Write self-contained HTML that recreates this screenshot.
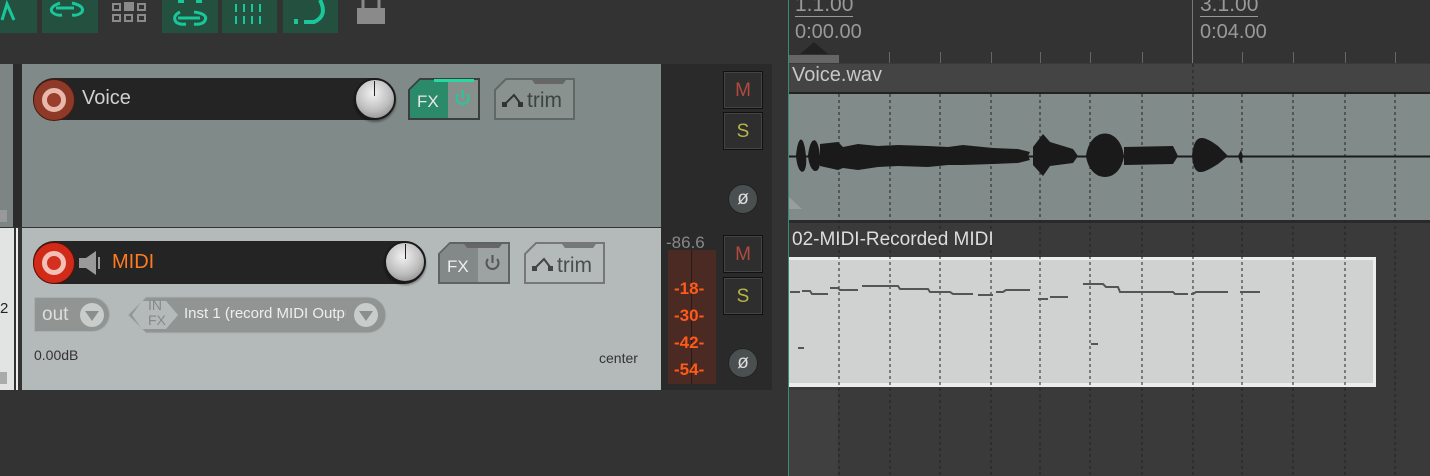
<!DOCTYPE html><html><head><style>
*{margin:0;padding:0;box-sizing:border-box}
body{width:1430px;height:476px;background:#333;position:relative;overflow:hidden;font-family:"Liberation Sans",sans-serif}
.a{position:absolute}
.tb{position:absolute;top:0;height:33px;background:#23503f}
.pill{position:absolute;background:#242424;border-radius:21px}
.knob{position:absolute;border-radius:50%;background:radial-gradient(circle at 45% 35%,#f2f2f2,#bdbdbd 55%,#7a7a7a);border:2px solid #1a1a1a;box-shadow:0 2px 2px rgba(0,0,0,.4)}
.ms{position:absolute;width:40px;height:38px;background:#2e2e2e;border:1px solid #111;box-shadow:inset 0 0 0 1px #444;font-size:19px;text-align:center;line-height:37px}
.ph{position:absolute;width:30px;height:30px;border-radius:50%;background:#4a4f50;border:1px solid #222;color:#ddd;font-size:19px;text-align:center;line-height:28px}
.tick{position:absolute;top:52px;width:1px;height:11px;background:#666}
</style></head><body>
<!-- toolbar -->
<div class="tb" style="left:0;width:37px"></div>
<div class="tb" style="left:42px;width:56px"></div>
<div class="tb" style="left:162px;width:56px"></div>
<div class="tb" style="left:222px;width:55px"></div>
<div class="tb" style="left:283px;width:55px"></div>
<svg class="a" style="left:0;top:0" width="400" height="35" fill="none" stroke="#19c79a" stroke-width="3">
<path d="M2 20 L7 4 L14 20"/>
<path d="M60 3 Q49 7 52 12 Q56 16 62 15 M56 8 H74 M72 3 Q85 6 82 12 Q78 16 72 15"/>
<g stroke="#8a8a8a" stroke-width="2"><rect x="113" y="4" width="7" height="6"/><rect x="125" y="3" width="8" height="7" fill="#8a8a8a"/><rect x="138" y="4" width="7" height="6"/><rect x="113" y="15" width="7" height="6"/><rect x="125" y="15" width="7" height="6"/><rect x="138" y="15" width="7" height="6"/></g>
<rect x="178" y="0" width="6" height="3" fill="#19c79a" stroke="none"/><rect x="196" y="0" width="6" height="3" fill="#19c79a" stroke="none"/>
<path d="M180 12 Q172 16 176 22 Q180 25 186 24 M178 18 H200 M194 12 Q210 14 204 22 Q200 25 194 24"/>
<path d="M236 4 V12 M244 4 V12 M252 4 V12 M260 4 V12 M236 16 V24 M244 16 V24 M252 16 V24 M260 16 V24" stroke-width="2"/>
<path d="M320 0 Q328 16 314 22 H304" stroke-width="4"/><rect x="294" y="19" width="4" height="5" fill="#19c79a" stroke="none"/>
<rect x="357" y="8" width="28" height="16" fill="#8a8a8a" stroke="none"/><path d="M363 8 V0 M379 8 V0" stroke="#8a8a8a" stroke-width="3"/>
</svg>
<!-- voice track -->
<div class="a" style="left:0;top:64px;width:13px;height:163px;background:#7c8584"></div>
<div class="a" style="left:0;top:210px;width:7px;height:12px;background:#999"></div>
<div class="a" style="left:13px;top:64px;width:9px;height:163px;background:#2b2b2b"></div>
<div class="a" style="left:22px;top:64px;width:639px;height:163px;background:#808a88"></div>
<div class="pill" style="left:33px;top:78px;width:362px;height:42px"></div>
<div class="a" style="left:33px;top:79px;width:42px;height:42px;border-radius:50%;background:#8f3a28;border:1px solid #4a1a10"></div>
<div class="a" style="left:42px;top:88px;width:24px;height:24px;border-radius:50%;border:5px solid #e8b8ac;background:#9a3f2c"></div>
<div class="a" style="left:82px;top:87px;color:#d0d0d0;font-size:20px">Voice</div>
<div class="knob" style="left:354px;top:78px;width:42px;height:42px"></div>
<div class="a" style="left:374px;top:81px;width:1px;height:15px;background:#222"></div>
<svg class="a" style="left:406px;top:76px" width="180" height="48">
<path d="M3 14 L14 3 H73 V43 H3 Z" fill="#878f8d" stroke="#3a3f3e" stroke-width="2"/>
<path d="M4 14 L14 4 H42 V42 H4 Z" fill="#2b8a6a"/>
<rect x="28" y="3" width="40" height="3" fill="#26d9a3"/>
<text x="11" y="31" font-family="Liberation Sans" font-size="17" fill="#e8e8e8">FX</text>
<path d="M52 18 a6 6 0 1 0 9 0 M56.5 14 V22" stroke="#24c99a" stroke-width="2" fill="none"/>
<path d="M89 14 L100 3 H168 V43 H89 Z" fill="#8a9290" stroke="#606766" stroke-width="2"/>
<path d="M126 4 H160 L157 8 H129 Z" fill="#666"/>
<path d="M99 28 L108 19 L114 27" stroke="#333" stroke-width="2" fill="none"/>
<rect x="96" y="26" width="5" height="5" fill="#333"/><rect x="112" y="26" width="5" height="5" fill="#333"/>
<text x="121" y="31" font-family="Liberation Sans" font-size="21" fill="#3f4443">trim</text>
</svg>
<!-- mcp -->
<div class="a" style="left:661px;top:64px;width:111px;height:326px;background:#2a2a2a"></div>
<div class="ms" style="left:723px;top:71px;color:#b24a3e">M</div>
<div class="ms" style="left:723px;top:112px;color:#b8b44a">S</div>
<div class="ph" style="left:728px;top:184px">ø</div>
<!-- midi track -->
<div class="a" style="left:0;top:228px;width:14px;height:162px;background:#e2e4e4"></div>
<div class="a" style="left:0;top:372px;width:7px;height:12px;background:#aaa"></div>
<div class="a" style="left:14px;top:228px;width:8px;height:162px;background:#333"></div>
<div class="a" style="left:16px;top:228px;width:2px;height:162px;background:#eee"></div>
<div class="a" style="left:22px;top:228px;width:639px;height:162px;background:#b4bab9"></div>
<div class="a" style="left:0;top:300px;font-size:15px;color:#222">2</div>
<div class="pill" style="left:33px;top:241px;width:392px;height:43px"></div>
<div class="a" style="left:33px;top:242px;width:42px;height:42px;border-radius:50%;background:#d22a18;border:1px solid #5a1008"></div>
<div class="a" style="left:42px;top:251px;width:24px;height:24px;border-radius:50%;border:5px solid #f3c0b6;background:#d33020"></div>
<svg class="a" style="left:78px;top:250px" width="24" height="26"><path d="M1 8 H8 L18 1 V25 L8 18 H1 Z" fill="#9a9a9a"/><rect x="20" y="7" width="2" height="12" fill="#9a9a9a"/></svg>
<div class="a" style="left:112px;top:251px;color:#ff7a20;font-size:20px">MIDI</div>
<div class="knob" style="left:384px;top:241px;width:42px;height:42px"></div>
<div class="a" style="left:405px;top:244px;width:1px;height:15px;background:#222"></div>
<svg class="a" style="left:436px;top:240px" width="180" height="48">
<path d="M3 14 L14 3 H73 V43 H3 Z" fill="#9da3a2" stroke="#5e6463" stroke-width="2"/>
<path d="M4 14 L14 4 H42 V42 H4 Z" fill="#838988"/>
<path d="M28 4 H66 L63 8 H31 Z" fill="#666"/>
<text x="11" y="32" font-family="Liberation Sans" font-size="17" fill="#eee">FX</text>
<path d="M52 19 a6 6 0 1 0 9 0 M56.5 15 V23" stroke="#555" stroke-width="2" fill="none"/>
<path d="M89 14 L100 3 H168 V43 H89 Z" fill="#b4bab9" stroke="#777" stroke-width="2"/>
<path d="M126 4 H160 L157 8 H129 Z" fill="#777"/>
<path d="M99 28 L108 19 L114 27" stroke="#444" stroke-width="2" fill="none"/>
<rect x="96" y="26" width="5" height="5" fill="#444"/><rect x="112" y="26" width="5" height="5" fill="#444"/>
<text x="121" y="32" font-family="Liberation Sans" font-size="21" fill="#4a4f4e">trim</text>
</svg>
<div class="a" style="left:34px;top:297px;width:76px;height:35px;border-radius:0 18px 18px 0;background:#909594;border:1px solid #a9afae"></div>
<div class="a" style="left:42px;top:304px;color:#ddd;font-size:19px">out</div>
<div class="a" style="left:80px;top:303px;width:24px;height:24px;border-radius:50%;background:#c8cccb"></div>
<svg class="a" style="left:84px;top:310px" width="16" height="12"><path d="M1 1 H15 L8 11 Z" fill="#8a8f8e"/></svg>
<svg class="a" style="left:126px;top:296px" width="262" height="38"><path d="M2 19 L20 1 H242 A18 18 0 0 1 242 37 H20 Z" fill="#909594" stroke="#aeb3b2"/><path d="M16 5 L40 5 L52 19 L40 33 L16 33 L6 19Z" fill="#b4bab9"/></svg>
<div class="a" style="left:148px;top:298px;color:#888;font-size:14px;line-height:15px">IN<br>FX</div>
<div class="a" style="left:184px;top:305px;color:#eee;font-size:15px;width:162px;overflow:hidden;white-space:nowrap">Inst 1 (record MIDI Output)</div>
<div class="a" style="left:354px;top:303px;width:24px;height:24px;border-radius:50%;background:#c8cccb"></div>
<svg class="a" style="left:358px;top:310px" width="16" height="12"><path d="M1 1 H15 L8 11 Z" fill="#8a8f8e"/></svg>
<div class="a" style="left:34px;top:347px;color:#333;font-size:14px">0.00dB</div>
<div class="a" style="left:599px;top:350px;color:#333;font-size:14px">center</div>
<div class="a" style="left:668px;top:250px;width:48px;height:134px;background:#4a2a22"></div>
<div class="a" style="left:691px;top:250px;width:1px;height:134px;background:#2a1a16"></div>
<div class="a" style="left:666px;top:233px;color:#888;font-size:17px">-86.6</div>
<div class="a" style="left:674px;top:275px;color:#ff5a1a;font-size:17px;line-height:27px;font-weight:bold">-18-<br>-30-<br>-42-<br>-54-</div>
<div class="ms" style="left:723px;top:235px;color:#b24a3e">M</div>
<div class="ms" style="left:723px;top:277px;color:#b8b44a">S</div>
<div class="ph" style="left:728px;top:348px">ø</div>
<!-- arrange -->
<div class="a" style="left:788px;top:0;width:642px;height:476px;background:#3a3a3a"></div>
<div class="a" style="left:788px;top:0;width:642px;height:63px;background:#333"></div>
<div class="a" style="left:788px;top:390px;width:50px;height:86px;background:#404040"></div>
<div class="a" style="left:795px;top:-6px;color:#999;font-size:21px;border-bottom:1px solid #999;line-height:22px">1.1.00</div>
<div class="a" style="left:795px;top:21px;color:#999;font-size:20px">0:00.00</div>
<div class="a" style="left:1200px;top:-6px;color:#999;font-size:21px;border-bottom:1px solid #999;line-height:22px">3.1.00</div>
<div class="a" style="left:1200px;top:21px;color:#999;font-size:20px">0:04.00</div>
<div class="a" style="left:1192px;top:0;width:1px;height:63px;background:#777"></div>
<div class="a" style="left:789px;top:55px;width:50px;height:8px;background:#666"></div>
<svg class="a" style="left:800px;top:41px" width="28" height="14"><path d="M0 13 L14 1 L28 13Z" fill="#222"/></svg>
<div class="tick" style="left:889px"></div><div class="tick" style="left:940px"></div><div class="tick" style="left:991px"></div><div class="tick" style="left:1040px"></div><div class="tick" style="left:1090px"></div><div class="tick" style="left:1142px"></div><div class="tick" style="left:1242px"></div><div class="tick" style="left:1293px"></div><div class="tick" style="left:1345px"></div><div class="tick" style="left:1395px"></div>
<div class="a" style="left:789px;top:64px;width:641px;height:29px;background:#444"></div>
<div class="a" style="left:789px;top:92px;width:641px;height:2px;background:#222"></div>
<div class="a" style="left:789px;top:94px;width:641px;height:126px;background:#818b89"></div>
<div class="a" style="left:789px;top:220px;width:641px;height:3px;background:#2a2a2a"></div>
<div class="a" style="left:789px;top:257px;width:587px;height:130px;background:#d0d2d1;border:3px solid #ececec;border-width:3px 3px 4px 0"></div>
<svg class="a" style="left:788px;top:64px" width="642" height="412">
<g stroke="#222" stroke-dasharray="3,3">
<path d="M51 30V412 M102 30V412 M152 30V412 M203 30V412 M252 30V412 M302 30V412 M354 30V412 M405 0V412 M454 30V412 M505 30V412 M557 30V412 M607 30V412"/></g>
<path d="M1 92.5 H642" stroke="#1a1a1a" stroke-width="2"/>
<path d="M8 92 C10 70 16 70 18 92 C20 112 10 114 8 92Z M20 92 C22 72 30 70 32 92 C34 112 22 112 20 92Z M32 80 L50 78 L55 83 L70 80 L90 82 L110 81 L140 82 L160 83 L175 81 L205 84 L230 85 L242 88 L240 92 L242 96 L230 99 L205 100 L175 101 L160 101 L140 103 L110 102 L90 103 L70 106 L55 104 L50 106 L32 102Z M245 83 L255 70 L262 78 L285 85 L290 92 L285 99 L262 102 L255 112 L245 101Z M298 92 C302 62 332 62 336 92 C332 120 302 120 298 92Z M336 83 L385 82 L390 92 L385 100 L336 101Z M404 92 C406 70 414 70 430 82 L440 92 L430 100 C414 110 406 114 404 92Z M450 92 L453 86 L455 92 L453 100Z" fill="#1a1a1a"/>
<g stroke="#555" stroke-width="2" fill="none"><path d="M2 228 H12 M14 227 H22 L24 230 H40 M42 224 H50 L52 226 H70 M74 222 H110 L112 225 H140 L142 228 H162 L165 230 H185 M190 231 H205 M208 228 H215 L218 226 H242 M250 235 H260 M262 233 H280 M295 220 H315 L318 223 H330 L332 228 H385 L387 230 H400 M403 230 H405 L408 228 H440 M452 228 H472 M10 284 H16 M303 280 H310"/></g>
<path d="M1 133 L14 145 H1Z" fill="#aaa" opacity=".6"/>
</svg>
<div class="a" style="left:792px;top:64px;color:#c8c8c8;font-size:20px">Voice.wav</div>
<div class="a" style="left:792px;top:229px;color:#ddd;font-size:19px;white-space:nowrap">02-MIDI-Recorded MIDI</div>
<div class="a" style="left:788px;top:0;width:1px;height:476px;background:#3a8a7a"></div>
</body></html>
